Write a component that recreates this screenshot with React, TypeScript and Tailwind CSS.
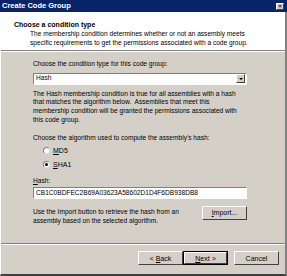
import React from 'react';

function WinButton({ children, bold = false, className = '' }: { children: React.ReactNode; bold?: boolean; className?: string }) {
  return (
    <div
      className={`flex items-center justify-center h-[14px] bg-[#d4d0c8] ${
        bold ? 'border border-black' : ''
      } ${className}`}
    >
      <div className="flex items-center justify-center w-full h-full border border-t-white border-l-white border-r-[#404040] border-b-[#404040]">
        <span className="text-[7px] leading-none text-black">{children}</span>
      </div>
    </div>
  );
}

function Radio({ checked, label, hotkey }: { checked: boolean; label: string; hotkey: string }) {
  return (
    <div className="flex items-center h-[13px] gap-[3px]">
      <div className="w-[7px] h-[7px] rounded-full bg-white border border-t-[#808080] border-l-[#808080] border-r-[#e0e0e0] border-b-[#e0e0e0] flex items-center justify-center">
        {checked && <div className="w-[3px] h-[3px] rounded-full bg-black" />}
      </div>
      <span className="text-[7px] leading-none">
        <span className="underline">{hotkey}</span>
        {label}
      </span>
    </div>
  );
}

export default function App() {
  return (
    <div
      className="w-[287px] h-[276px] flex flex-col bg-[#d4d0c8] text-black overflow-hidden"
      style={{ fontFamily: '"Liberation Sans", Arial, sans-serif' }}
    >
      {/* title bar */}
      <div className="h-[12px] flex items-center justify-between bg-[#0a246a] pl-[2px] pr-[3px] shrink-0">
        <span className="text-white font-bold text-[7.5px] leading-none">Create Code Group</span>
        <div className="w-[8px] h-[7px] bg-[#d4d0c8] border border-t-white border-l-white border-r-[#404040] border-b-[#404040] flex items-center justify-center">
          <span className="text-[6px] leading-none font-bold">×</span>
        </div>
      </div>

      <div className="flex-1 flex flex-col border-l border-l-white border-r-2 border-r-[#808080] border-b-2 border-b-[#404040]">
        {/* header */}
        <div className="h-[38px] bg-white flex flex-col pt-[8px] shrink-0">
          <div className="pl-[13px] text-[7px] font-bold leading-[9px]">Choose a condition type</div>
          <div className="pl-[29px] text-[6.6px] leading-[8.5px] mt-[1px]">
            The membership condition determines whether or not an assembly meets
            <br />
            specific requirements to get the permissions associated with a code group.
          </div>
        </div>
        <div className="h-px bg-[#808080] shrink-0" />
        <div className="h-px bg-white shrink-0" />

        {/* body */}
        <div className="flex flex-col pl-[32px] pr-[38px] pt-[8px] text-[6.6px] leading-[8.7px]">
          <div>Choose the condition type for this code group:</div>
          <div className="mt-[4px] h-[12px] bg-white flex items-center justify-between border border-t-[#808080] border-l-[#808080] border-r-white border-b-white">
            <span className="pl-[2px]">Hash</span>
            <div className="w-[9px] h-[9px] mr-[1px] bg-[#d4d0c8] border border-t-white border-l-white border-r-[#404040] border-b-[#404040] flex items-center justify-center">
              <div className="w-0 h-0 border-l-[2px] border-r-[2px] border-t-[2px] border-l-transparent border-r-transparent border-t-black" />
            </div>
          </div>

          <div className="mt-[5px] whitespace-nowrap">
            The Hash membership condition is true for all assemblies with a hash
            <br />
            that matches the algorithm below.&nbsp; Assemblies that meet this
            <br />
            membership condition will be granted the permissions associated with
            <br />
            this code group.
          </div>

          <div className="mt-[9px]">Choose the algorithm used to compute the assembly's hash:</div>

          <div className="flex flex-col gap-[1px] pl-[10px] mt-[2px]">
            <Radio checked={false} hotkey="M" label="D5" />
            <Radio checked hotkey="S" label="HA1" />
          </div>

          <div className="mt-[6px]">
            <span className="underline">H</span>ash:
          </div>
          <div className="mt-[1px] h-[12px] bg-white flex items-center border border-t-[#808080] border-l-[#808080] border-r-white border-b-white pl-[2px]">
            CB1C0BDFEC2B69A03623A58602D1D4F6DB938DB8
          </div>

          <div className="mt-[7px] flex items-start justify-between">
            <div className="leading-[9px] mt-[1px]">
              Use the Import button to retrieve the hash from an
              <br />
              assembly based on the selected algorithm.
            </div>
            <WinButton className="w-[45px]">
              <span className="underline">I</span>mport...
            </WinButton>
          </div>
        </div>

        <div className="flex-1" />
        <div className="h-px bg-[#808080] shrink-0" />
        <div className="h-px bg-white shrink-0" />

        {/* footer buttons */}
        <div className="h-[29px] flex items-start justify-end pt-[6px] pr-[6px] shrink-0">
          <WinButton className="w-[45px]">
            &lt; <span className="underline">B</span>ack
          </WinButton>
          <WinButton bold className="w-[45px]">
            <span className="underline">N</span>ext &gt;
          </WinButton>
          <WinButton className="w-[45px] ml-[6px]">Cancel</WinButton>
        </div>
      </div>
    </div>
  );
}
